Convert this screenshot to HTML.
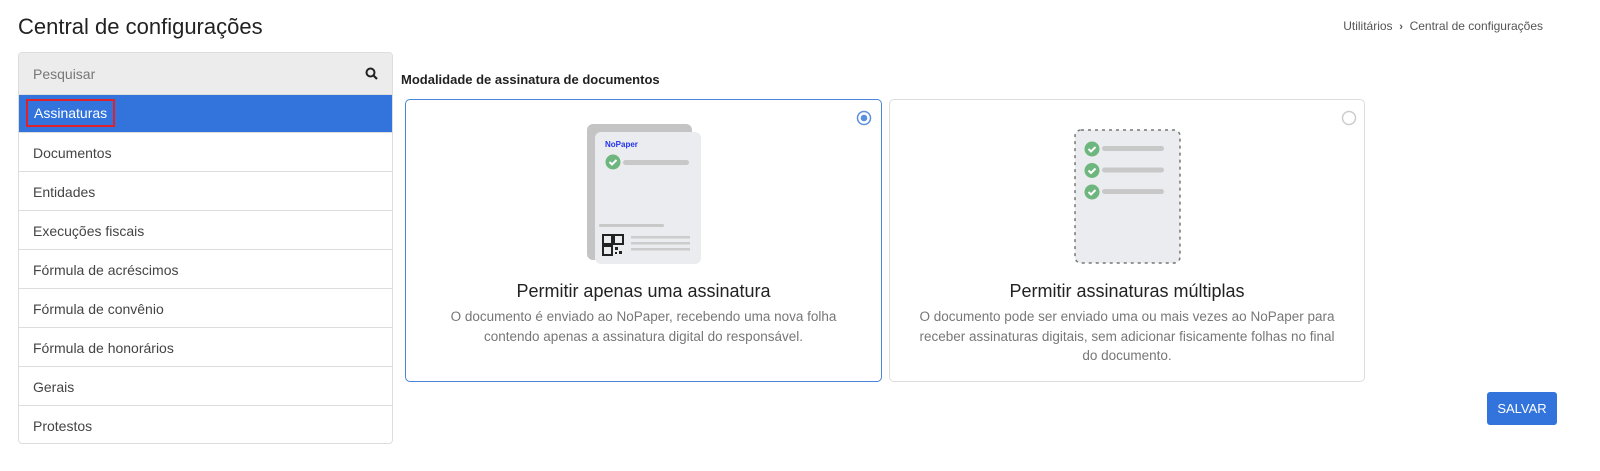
<!DOCTYPE html>
<html><head><meta charset="utf-8"><style>
*{box-sizing:border-box;margin:0;padding:0}
body{width:1600px;height:471px;background:#fff;font-family:"Liberation Sans",sans-serif;color:#333;position:relative;overflow:hidden}
.a{position:absolute}
h1{position:absolute;left:18px;top:14px;font-size:22px;font-weight:normal;color:#222}
.bc{right:57px;top:19px;font-size:12px;color:#555;position:absolute}
.side{left:18px;top:52px;width:375px;height:392px;border:1px solid #ddd;border-radius:4px;overflow:hidden}
.search{height:42px;background:#ececec;border-bottom:1px solid #ddd;padding:13px 14px;font-size:14px;color:#777;position:relative}
.item{height:39px;border-bottom:1px solid #ddd;padding:12px 14px;font-size:14px;color:#444}
.sel{background:#3273dc;color:#fff;padding:0;position:relative;height:38px}
.card{top:99px;width:477px;height:283px;border:1px solid #ddd;border-radius:5px}
.t{width:100%;text-align:center;font-size:18px;color:#222;position:absolute;top:181px}
.d{position:absolute;top:207px;left:20px;right:20px;text-align:center;font-size:13.5px;line-height:19.5px;color:#777}
</style></head><body>
<h1>Central de configurações</h1>
<div class="bc">Utilitários &nbsp;<b style="font-size:11px">›</b>&nbsp; Central de configurações</div>
<div class="a side">
<div class="search">Pesquisar
<svg class="a" style="right:14px;top:14px" width="13" height="13" viewBox="0 0 13 13"><circle cx="5.5" cy="5.5" r="4" fill="none" stroke="#222" stroke-width="2"/><path d="M8.5 8.5L12 12" stroke="#222" stroke-width="2.2"/></svg></div>
<div class="item sel"><span class="a" style="left:7px;top:4px;border:2px solid #e0202a;padding:4px 6px;font-size:14px">Assinaturas</span></div>
<div class="item">Documentos</div>
<div class="item">Entidades</div>
<div class="item">Execuções fiscais</div>
<div class="item">Fórmula de acréscimos</div>
<div class="item">Fórmula de convênio</div>
<div class="item">Fórmula de honorários</div>
<div class="item">Gerais</div>
<div class="item" style="border:none">Protestos</div>
</div>
<div class="a" style="left:401px;top:72px;font-size:13px;font-weight:bold;color:#222">Modalidade de assinatura de documentos</div>
<div class="a card" style="left:405px;border-color:#4a85dc">
<svg class="a" style="left:450px;top:10px" width="16" height="16"><circle cx="8" cy="8" r="6.5" fill="#fff" stroke="#5b8fe0" stroke-width="1.5"/><circle cx="8" cy="8" r="3.3" fill="#5b8fe0"/></svg>
<svg class="a" style="left:178px;top:22px" width="120" height="145">
<rect x="3" y="2" width="105" height="136" rx="6" fill="#c4c4c4"/>
<rect x="11" y="10" width="106" height="132" rx="6" fill="#ebecef"/>
<text x="21" y="25" font-size="8" font-weight="bold" fill="#2233ee" font-family="Liberation Sans">NoPaper</text>
<circle cx="29" cy="40" r="7.5" fill="#6db67d"/><path d="M25.5 40l2.5 2.5 4.5-4.5" stroke="#fff" stroke-width="2" fill="none"/>
<rect x="39" y="38" width="66" height="5" rx="2.5" fill="#c8c8c8"/>
<rect x="15" y="102" width="65" height="3" rx="1.5" fill="#c8c8c8"/>
<rect x="19" y="113" width="9" height="9" fill="none" stroke="#222" stroke-width="2"/><rect x="30" y="113" width="9" height="9" fill="none" stroke="#222" stroke-width="2"/><rect x="19" y="124" width="9" height="9" fill="none" stroke="#222" stroke-width="2"/><rect x="31" y="125" width="3" height="3" fill="#222"/><rect x="35" y="129" width="3" height="3" fill="#222"/><rect x="31" y="130" width="2" height="2" fill="#222"/>
<rect x="47" y="114" width="59" height="2.5" fill="#ccc"/><rect x="47" y="120" width="59" height="2.5" fill="#ccc"/><rect x="47" y="126" width="59" height="2.5" fill="#ccc"/>
</svg>
<div class="t">Permitir apenas uma assinatura</div>
<div class="d">O documento é enviado ao NoPaper, recebendo uma nova folha<br>contendo apenas a assinatura digital do responsável.</div>
</div>
<div class="a card" style="left:889px;width:476px">
<svg class="a" style="left:451px;top:10px" width="16" height="16"><circle cx="8" cy="8" r="6.5" fill="#fff" stroke="#ccc" stroke-width="1.5"/></svg>
<svg class="a" style="left:183px;top:28px" width="110" height="140">
<rect x="2" y="2" width="105" height="133" rx="6" fill="#ebecef" stroke="#777" stroke-width="1.5" stroke-dasharray="3 4"/>
<g><circle cx="19" cy="21" r="7.5" fill="#6db67d"/><path d="M15.5 21l2.5 2.5 4.5-4.5" stroke="#fff" stroke-width="2" fill="none"/><rect x="29" y="18" width="62" height="5" rx="2.5" fill="#c8c8c8"/></g>
<g transform="translate(0,21.5)"><circle cx="19" cy="21" r="7.5" fill="#6db67d"/><path d="M15.5 21l2.5 2.5 4.5-4.5" stroke="#fff" stroke-width="2" fill="none"/><rect x="29" y="18" width="62" height="5" rx="2.5" fill="#c8c8c8"/></g>
<g transform="translate(0,43)"><circle cx="19" cy="21" r="7.5" fill="#6db67d"/><path d="M15.5 21l2.5 2.5 4.5-4.5" stroke="#fff" stroke-width="2" fill="none"/><rect x="29" y="18" width="62" height="5" rx="2.5" fill="#c8c8c8"/></g>
</svg>
<div class="t">Permitir assinaturas múltiplas</div>
<div class="d">O documento pode ser enviado uma ou mais vezes ao NoPaper para<br>receber assinaturas digitais, sem adicionar fisicamente folhas no final<br>do documento.</div>
</div>
<div class="a" style="left:1487px;top:392px;width:70px;height:33px;background:#3273dc;border-radius:3px;color:#fff;font-size:13px;text-align:center;line-height:33px">SALVAR</div>
</body></html>
